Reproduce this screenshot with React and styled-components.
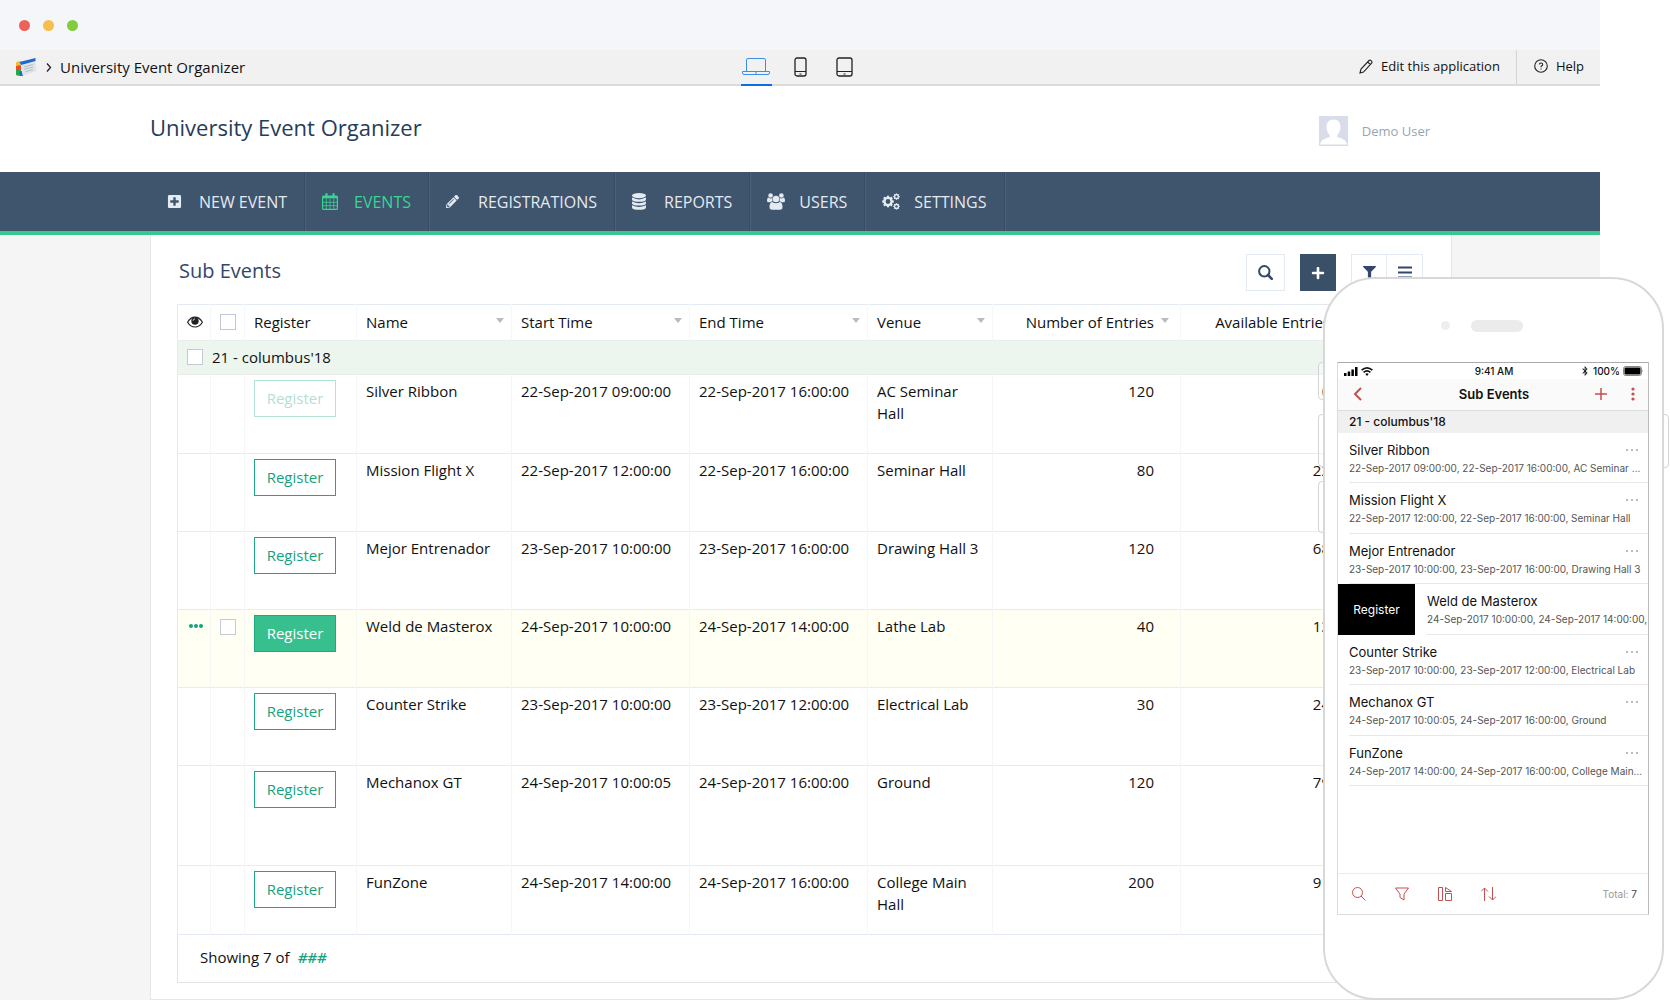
import React from "react";
import styled, { createGlobalStyle } from "styled-components";
import { FaPlusSquare, FaPencilAlt, FaPlus, FaFilter, FaBluetoothB } from "react-icons/fa";

const NAV = [
  { label: "NEW EVENT", icon: "plus" },
  { label: "EVENTS", icon: "calendar", active: true },
  { label: "REGISTRATIONS", icon: "pencil" },
  { label: "REPORTS", icon: "database" },
  { label: "USERS", icon: "users" },
  { label: "SETTINGS", icon: "cogs" },
];

const EVENTS = [
  {
    name: "Silver Ribbon",
    start: "22-Sep-2017 09:00:00",
    end: "22-Sep-2017 16:00:00",
    venue: "AC Seminar Hall",
    entries: 120,
    available: 0,
    closed: true,
    height: 79,
  },
  {
    name: "Mission Flight X",
    start: "22-Sep-2017 12:00:00",
    end: "22-Sep-2017 16:00:00",
    venue: "Seminar Hall",
    entries: 80,
    available: 22,
    height: 78,
  },
  {
    name: "Mejor Entrenador",
    start: "23-Sep-2017 10:00:00",
    end: "23-Sep-2017 16:00:00",
    venue: "Drawing Hall 3",
    entries: 120,
    available: 68,
    height: 78,
  },
  {
    name: "Weld de Masterox",
    start: "24-Sep-2017 10:00:00",
    end: "24-Sep-2017 14:00:00",
    venue: "Lathe Lab",
    entries: 40,
    available: 13,
    selected: true,
    height: 78,
  },
  {
    name: "Counter Strike",
    start: "23-Sep-2017 10:00:00",
    end: "23-Sep-2017 12:00:00",
    venue: "Electrical Lab",
    entries: 30,
    available: 24,
    height: 78,
  },
  {
    name: "Mechanox GT",
    start: "24-Sep-2017 10:00:05",
    end: "24-Sep-2017 16:00:00",
    venue: "Ground",
    entries: 120,
    available: 79,
    height: 100,
  },
  {
    name: "FunZone",
    start: "24-Sep-2017 14:00:00",
    end: "24-Sep-2017 16:00:00",
    venue: "College Main Hall",
    entries: 200,
    available: 91,
    height: 69,
  },
];

const GlobalStyle = createGlobalStyle`
  * {
    box-sizing: border-box;
  }
  body {
    margin: 0;
    background: #fff;
    color: #111;
    font-family: "Open Sans", sans-serif;
    font-size: 15px;
  }
  button {
    font-family: inherit;
    font-size: inherit;
    cursor: pointer;
  }
  a {
    color: inherit;
    text-decoration: none;
  }
`;

const Page = styled.div`
  position: relative;
  padding-right: 70px;
  overflow: hidden;
`;

const TitleBar = styled.div`
  display: flex;
  align-items: center;
  gap: 13px;
  height: 50px;
  padding-left: 19px;
  background: #f4f6f9;
`;

const Dot = styled.span`
  width: 11px;
  height: 11px;
  border-radius: 50%;
  background: ${(props) => props.$color};
`;

const AppBar = styled.div`
  display: grid;
  grid-template-columns: 1fr auto 1fr;
  height: 36px;
  background: #f1f1f1;
  border-bottom: 2px solid #dcdcdc;
`;

const Crumbs = styled.div`
  display: flex;
  align-items: center;
  gap: 8px;
  padding-left: 15px;
`;

const Devices = styled.div`
  display: flex;
  gap: 13px;
  margin-bottom: -2px;
`;

const DeviceButton = styled.button`
  display: flex;
  align-items: center;
  justify-content: center;
  width: 31px;
  padding: 0;
  border: 0;
  border-bottom: 2px solid ${(props) => (props.$active ? "#0a6ee0" : "transparent")};
  background: none;
  color: ${(props) => (props.$active ? "#3b8ee8" : "#222")};
`;

const AppLinks = styled.div`
  display: flex;
  justify-content: flex-end;
  font-size: 13px;
`;

const AppLink = styled.a`
  display: flex;
  align-items: center;
  gap: 8px;
  padding: 0 16px 2px 17px;
  & + & {
    border-left: 1px solid #d4d4d8;
  }
`;

const Header = styled.header`
  display: flex;
  align-items: center;
  justify-content: space-between;
  height: 86px;
  padding: 0 170px 4px 150px;
`;

const AppName = styled.h1`
  margin: 0;
  color: #263c58;
  font-size: 22px;
  font-weight: 400;
`;

const User = styled.a`
  display: flex;
  align-items: center;
  gap: 14px;
  padding-top: 7px;
  color: #93a7b3;
  font-size: 13px;
`;

const Nav = styled.nav`
  display: flex;
  height: 63px;
  padding-left: 150px;
  background: #3f546d;
  border-bottom: 4px solid #37c88f;
`;

const NavItem = styled.a`
  display: flex;
  align-items: center;
  padding: 0 17px;
  border-right: 1px solid #364a61;
  box-shadow: 1px 0 0 #4a627d;
  color: ${(props) => (props.$active ? "#36d694" : "#e4eaf1")};
  font-size: 16px;
`;

const NavIcon = styled.span`
  display: flex;
  width: 32px;
`;

const Content = styled.main`
  min-height: 765px;
  padding: 0 148px 0 150px;
  background: #f5f5f5;
`;

const Panel = styled.section`
  padding: 18px 26px 16px;
  background: #fff;
  border: 1px solid #e6e6e6;
  border-top: 0;
`;

const PanelHead = styled.div`
  display: flex;
  align-items: flex-end;
  height: 38px;
  margin-bottom: 13px;
  padding: 0 2px;
`;

const PanelTitle = styled.h2`
  flex: 1;
  margin: 0;
  color: #32486a;
  font-size: 20px;
  font-weight: 400;
  line-height: 40px;
`;

const ToolButton = styled.button`
  display: flex;
  align-items: center;
  justify-content: center;
  width: 36px;
  height: 37px;
  padding: 0;
  border: 1px solid ${(props) => (props.$solid ? "#3a4f68" : "#e3eaf1")};
  background: ${(props) => (props.$solid ? "#3a4f68" : "#fff")};
  color: ${(props) => (props.$solid ? "#fff" : "#33466b")};
`;

const SearchButton = styled(ToolButton)`
  width: 39px;
`;

const ToolGroup = styled.div`
  display: flex;
  margin-left: 15px;
  ${ToolButton} + ${ToolButton} {
    border-left: 0;
  }
`;

const Table = styled.table`
  width: 100%;
  table-layout: fixed;
  border: 1px solid #e3eaf1;
  border-collapse: collapse;
`;

const Th = styled.th`
  position: relative;
  height: 36px;
  padding: 0 9px 2px;
  border-right: 1px solid #f5f7f8;
  font-weight: 400;
  text-align: ${(props) => props.$align || "left"};
  white-space: nowrap;
`;

const SortArrow = styled.span`
  position: absolute;
  top: 13px;
  right: ${(props) => (props.$inset ? 11 : 7)}px;
  border: 4px solid transparent;
  border-top: 5px solid #bbb;
  border-bottom: 0;
`;

const GroupCell = styled.td`
  height: 34px;
  padding: 0 9px 1px;
  background: #ecf6ef;
  border-top: 1px solid #e9eeea;
`;

const Row = styled.tr`
  background: ${(props) => (props.$selected ? "#fffff3" : "#fff")};
`;

const Td = styled.td`
  padding: 5px 9px 0;
  border-top: 1px solid #ebebeb;
  border-right: 1px solid #f6f6f6;
  line-height: 22px;
  text-align: ${(props) => props.$align || "left"};
  vertical-align: top;
`;

const CheckTd = styled(Td)`
  padding-top: 9px;
`;

const Check = styled.input`
  display: block;
  width: 16px;
  height: 16px;
  margin: 0;
  appearance: none;
  background: #fff;
  border: 1px solid #c3cad3;
`;

const GroupLabel = styled.label`
  display: flex;
  align-items: center;
  gap: 9px;
`;

const RegisterButton = styled.button`
  display: block;
  width: 82px;
  height: 37px;
  padding: 0 0 1px;
  border: 1px solid #1fa884;
  background: ${(props) => (props.$filled ? "#37c08d" : "#fff")};
  color: ${(props) => (props.$filled ? "#fff" : "#14a37f")};
  &:disabled {
    border-color: #b4e3d6;
    color: #b4e0d3;
  }
`;

const MoreButton = styled.button`
  display: block;
  padding: 5px 2px;
  border: 0;
  background: none;
  color: #14a37f;
  svg {
    display: block;
  }
`;

const TableFoot = styled.div`
  display: flex;
  align-items: center;
  gap: 8px;
  height: 48px;
  padding: 0 0 4px 22px;
  border: 1px solid #e4e4e4;
  border-top: 0;
`;

const Total = styled.a`
  color: #14a37f;
  font-style: italic;
  font-weight: 600;
`;

const NumberText = styled.span`
  padding-right: 17px;
`;

const AvailableText = styled.span`
  padding-right: 85px;
`;

const Phone = styled.aside`
  position: absolute;
  top: 277px;
  right: 6px;
  width: 341px;
  height: 723px;
  font-family: Inter, sans-serif;
  color: #111;
`;

const PhoneKey = styled.span`
  position: absolute;
  top: ${(props) => props.$top}px;
  ${(props) => props.$side}: -5px;
  width: 12px;
  height: ${(props) => props.$size}px;
  border: 1px solid #d4d4d4;
  border-radius: 4px;
  background: rgba(255, 255, 255, 0.4);
`;

const PhoneBody = styled.div`
  position: relative;
  height: 100%;
  padding: 0 13px 0 12px;
  border: 2px solid #d8d8d8;
  border-radius: 52px;
  background: #fff;
`;

const Speaker = styled.div`
  display: flex;
  align-items: center;
  justify-content: center;
  gap: 21px;
  height: 83px;
  padding: 10px 22px 0 0;
`;

const Lens = styled.span`
  width: 9px;
  height: 9px;
  border-radius: 50%;
  background: #eee;
`;

const Grille = styled.span`
  width: 52px;
  height: 12px;
  border-radius: 6px;
  background: #ebebeb;
`;

const Screen = styled.div`
  display: flex;
  flex-direction: column;
  height: 553px;
  border: 1px solid #dcdcdc;
  border-top-color: #aaa;
  border-right-color: #bbb;
`;

const StatusBar = styled.div`
  display: grid;
  grid-template-columns: 1fr auto 1fr;
  align-items: center;
  height: 16px;
  padding: 0 4px 0 6px;
  font-size: 10px;
  font-weight: 500;
`;

const StatusSide = styled.div`
  display: flex;
  align-items: center;
  justify-content: ${(props) => (props.$end ? "flex-end" : "flex-start")};
  gap: 3px;
`;

const MobileBar = styled.div`
  display: grid;
  grid-template-columns: 1fr auto 1fr;
  align-items: center;
  height: 32px;
  padding: 0 13px 2px 15px;
  background: #fafafa;
  border-bottom: 1px solid #ddd;
`;

const MobileTitle = styled.h3`
  margin: 0;
  font-size: 13px;
  font-weight: 600;
`;

const MobileActions = styled.div`
  display: flex;
  align-items: center;
  justify-content: flex-end;
  gap: 23px;
`;

const RedButton = styled.button`
  display: flex;
  padding: 0;
  border: 0;
  background: none;
  color: #c4504e;
`;

const MobileGroup = styled.div`
  height: 22px;
  padding-left: 11px;
  background: #f0f0f0;
  font-size: 12px;
  font-weight: 500;
  line-height: 22px;
`;

const MobileList = styled.ul`
  display: grid;
  grid-auto-rows: 1fr;
  height: 353px;
  margin: 0;
  padding: 0;
  list-style: none;
`;

const MobileItem = styled.li`
  display: flex;
  padding-left: ${(props) => (props.$open ? 0 : 11)}px;
  overflow: hidden;
`;

const MobileRegister = styled.button`
  flex: none;
  width: 77px;
  margin-right: 12px;
  border: 0;
  background: #000;
  color: #fff;
  font-size: 12px;
`;

const MobileText = styled.div`
  position: relative;
  flex: 1;
  min-width: 0;
  padding: 8px ${(props) => (props.$open ? 0 : 4)}px 0 0;
  border-bottom: 1px solid #e8e8e8;
`;

const MobileName = styled.div`
  font-size: 13px;
  line-height: 18px;
`;

const MobileInfo = styled.div`
  overflow: hidden;
  color: #555;
  font-size: 10px;
  line-height: 18px;
  text-overflow: ${(props) => (props.$open ? "clip" : "ellipsis")};
  white-space: nowrap;
`;

const ItemMenu = styled(RedButton)`
  position: absolute;
  top: 15px;
  right: 9px;
  color: #a5a5a5;
`;

const MobileFoot = styled.div`
  display: flex;
  align-items: center;
  gap: 29px;
  height: 41px;
  margin-top: auto;
  padding: 0 11px 0 14px;
  border-top: 1px solid #ececec;
`;

const MobileTotal = styled.span`
  margin-left: auto;
  color: #999;
  font-size: 10px;
  b {
    color: #444;
    font-weight: 400;
  }
`;

function Logo() {
  return (
    <svg width="22" height="20" viewBox="0 0 22 20">
      <path d="M1 6q0-1 1-1.300L6 4v8H1z" fill="#f8c01e" />
      <path d="M1 9l5-1v5H1z" fill="#ee4b2b" />
      <path d="M1 13h5v6l-4-.5q-1-.2-1-1.500z" fill="#27a844" />
      <path d="M4 15l3-1 1 5H5z" fill="#1673c9" />
      <path d="M5 5L20 1.500l1.500 12.500L8 19z" fill="#dfe4e9" />
      <path d="M4.500 5L20.500 1v3L6 8z" fill="#1c69cf" />
      <path d="M9 10l9-2.500M9 12.500l9-2.500M10 15l8-2.500" stroke="#b4bcc6" />
    </svg>
  );
}

function Laptop() {
  return (
    <svg width="28" height="20" viewBox="0 0 28 20" fill="none" stroke="currentColor">
      <path d="M4.500 14.500V3q0-1.500 1.500-1.500h16q1.500 0 1.500 1.500v11.500" />
      <path d="M.5 14.500h27v1.500q0 1.500-1.500 1.500H2q-1.500 0-1.500-1.500zM13 16h2" />
    </svg>
  );
}

function Handheld({ width }) {
  return (
    <svg width={width} height="20" viewBox={`0 0 ${width} 20`} fill="none" stroke="currentColor">
      <rect x="1" y="1" width={width - 2} height="18" rx="2" strokeWidth="1.300" />
      <path d={`M1 14.500h${width - 2}M${width / 2 - 1} 17h2`} />
    </svg>
  );
}

function PencilOutline() {
  return (
    <svg width="14" height="15" viewBox="0 0 14 15" fill="none" stroke="#222" strokeWidth="1.100">
      <path d="M1 14l1-4 8-8.500q1-.8 2 .2l.6.600q.8 1 0 1.800L4.500 13zM8.700 3l3 2.800" />
    </svg>
  );
}

function HelpIcon() {
  return (
    <svg width="14" height="14" viewBox="0 0 14 14" fill="none" stroke="#222" strokeWidth="1.100">
      <circle cx="7" cy="7" r="6.300" />
      <path d="M5.300 5.600q0-1.600 1.700-1.600t1.700 1.400q0 .8-.9 1.300T7 8.200M7 9.400v1.200" />
    </svg>
  );
}

function Avatar() {
  return (
    <svg width="29" height="30" viewBox="0 0 29 30">
      <path d="M0 0h29v30H0z" fill="#d9dde9" />
      <path
        d="M14.500 3.500c4.500 0 7 3 7 7.500 0 3-1.200 6-3.200 8v2.200c4 .8 9 2.500 9.700 7.300H1c.7-4.800 5.700-6.500 9.700-7.300V19c-2-2-3.200-5-3.200-8 0-4.500 2.500-7.500 7-7.500z"
        fill="#fff"
      />
    </svg>
  );
}

function CalendarGrid() {
  return (
    <svg width="16" height="17" viewBox="0 0 16 17" fill="none" stroke="currentColor">
      <rect x=".6" y="3" width="14.800" height="13.400" rx="1" strokeWidth="1.200" />
      <path d="M1 4.200h14" strokeWidth="2.400" />
      <path d="M4.500 1.200v3M11.500 1.200v3" strokeWidth="2.200" strokeLinecap="round" />
      <path d="M4.300 6v10M8 6v10M11.700 6v10M1 9.300h14M1 12.700h14" strokeWidth=".8" />
    </svg>
  );
}

function Database() {
  return (
    <svg width="14" height="17" viewBox="0 0 14 17" fill="currentColor">
      <ellipse cx="7" cy="2.600" rx="7" ry="2.600" />
      <path d="M0 4.600q7 3.600 14 0v1.800q0 2.300-7 2.300T0 6.400z" />
      <path d="M0 8.400q7 3.600 14 0v1.800q0 2.300-7 2.300t-7-2.300z" />
      <path d="M0 12.200q7 3.600 14 0v2q0 2.600-7 2.600t-7-2.600z" />
    </svg>
  );
}

function Users() {
  return (
    <svg width="18" height="17" viewBox="0 0 18 17" fill="currentColor">
      <circle cx="3.600" cy="2.500" r="2.300" />
      <circle cx="14.400" cy="2.500" r="2.300" />
      <path d="M1.200 4.500q2.300 1.500 4.300.5-.8 1.800.2 3.300-1.300 0-2.200.9H1.600Q0 9.200 0 7.700 0 5 1.200 4.500z" />
      <path d="M16.800 4.500q-2.300 1.500-4.300.5.8 1.800-.2 3.300 1.300 0 2.200.9h1.900q1.600 0 1.600-1.500 0-2.700-1.200-3.200z" />
      <circle cx="9" cy="6" r="3.300" />
      <path d="M5.200 9q3.800 2.600 7.600 0 2.700.5 2.700 5 0 2.800-2.500 2.800H5Q2.500 16.800 2.500 14q0-4.500 2.700-5z" />
    </svg>
  );
}

// A ring with eight square teeth around it
function Gear({ x, y, r, ring, tooth }) {
  return (
    <g transform={`translate(${x} ${y})`} stroke="currentColor" fill="none">
      <circle r={r} strokeWidth={ring} />
      {[0, 45, 90, 135, 180, 225, 270, 315].map((angle) => (
        <path
          key={angle}
          d={`M0 ${-r}v${-tooth}`}
          strokeWidth={tooth}
          transform={`rotate(${angle})`}
        />
      ))}
    </g>
  );
}

function Cogs() {
  return (
    <svg width="18" height="17" viewBox="0 0 18 17">
      <Gear x={6} y={8.500} r={3.600} ring={2.400} tooth={2.200} />
      <Gear x={14.500} y={3.600} r={1.900} ring={1.300} tooth={1.300} />
      <Gear x={14.500} y={13.400} r={1.900} ring={1.300} tooth={1.300} />
    </svg>
  );
}

function Eye() {
  return (
    <svg width="16" height="12" viewBox="0 0 16 12" fill="none" stroke="#222" display="block">
      <path d="M.6 6.200Q3.500 1.200 8 1.200t7.400 5Q12.500 11 8 11T.6 6.200z" strokeWidth="1.200" />
      <circle cx="8" cy="5" r="3.700" fill="#222" stroke="none" />
      <path d="M6 4.800q.1-1.700 2-1.900" stroke="#fff" strokeWidth=".8" />
    </svg>
  );
}

function SearchIcon() {
  return (
    <svg width="15" height="15" viewBox="0 0 15 15" fill="none" stroke="currentColor">
      <circle cx="6.300" cy="6.300" r="5.200" strokeWidth="2" />
      <path d="M10 10l3.800 3.800" strokeWidth="2.500" strokeLinecap="round" />
    </svg>
  );
}

function ListIcon() {
  return (
    <svg width="14" height="13" viewBox="0 0 14 13" stroke="currentColor" strokeWidth="2">
      <path d="M0 1.500h14M0 6.500h14M0 11.500h14" />
    </svg>
  );
}

function Dots({ size = 2, vertical }) {
  const points = [2, 7, 12];
  return (
    <svg width={vertical ? 4 : 14} height={vertical ? 14 : 4} fill="currentColor">
      {points.map((p) => (
        <circle key={p} cx={vertical ? 2 : p} cy={vertical ? p : 2} r={size} />
      ))}
    </svg>
  );
}

function Signal() {
  return (
    <svg width="14" height="9" viewBox="0 0 14 9">
      <path d="M0 6h2.500v3H0zM3.700 4.500h2.500V9H3.700zM7.400 2.500h2.500V9H7.400zM11 0h2.500v9H11z" />
    </svg>
  );
}

function Wifi() {
  return (
    <svg width="12" height="9" viewBox="0 0 12 9" fill="none" stroke="#111" strokeWidth="1.700">
      <path d="M.6 3.200q5.400-4.600 10.800 0M2.600 5.300q3.400-2.800 6.800 0" />
      <path d="M6 9L4.300 7q1.700-1.400 3.400 0z" fill="#111" stroke="none" />
    </svg>
  );
}

function Battery() {
  return (
    <svg width="21" height="10" viewBox="0 0 21 10">
      <rect x=".5" y=".5" width="18" height="9" rx="2" fill="none" stroke="#888" />
      <rect x="1.500" y="1.500" width="16" height="7" rx="1" />
      <path d="M19.500 3.500q1.500 1.500 0 3z" fill="#888" />
    </svg>
  );
}

function LineIcon({ path, width = 14 }) {
  return (
    <svg width={width} height="14" viewBox={`0 0 ${width} 14`} fill="none" stroke="currentColor">
      <path d={path} />
    </svg>
  );
}

const NAV_ICONS = {
  plus: <FaPlusSquare size={15} />,
  calendar: <CalendarGrid />,
  pencil: <FaPencilAlt size={13} />,
  database: <Database />,
  users: <Users />,
  cogs: <Cogs />,
};

const FOOT_ICONS = [
  ["Search", "M10.500 5.500a5 5 0 1 1-10 0a5 5 0 0 1 10 0zM9 9l4.500 4.500"],
  ["Filter", "M.5 1h13L9 7v6l-4-2.500V7z"],
  ["Reports", "M.5.500h4v13h-4zM7.500 6.500h6v7h-6zM7.500 4.500v-4l6 4z"],
  ["Sort", "M3.500 14V1M0 4.500l3.500-3.500L7 4.500M11.500 0v13M8 9.500l3.500 3.500 3.500-3.500"],
];

function EventTable() {
  return (
    <Table>
      <colgroup>
        <col width="33" />
        <col width="34" />
        <col width="112" />
        <col width="155" />
        <col width="178" />
        <col width="178" />
        <col width="125" />
        <col width="188" />
        <col />
      </colgroup>
      <thead>
        <tr>
          <Th>
            <Eye />
          </Th>
          <Th>
            <Check type="checkbox" aria-label="Select all" />
          </Th>
          <Th>Register</Th>
          {["Name", "Start Time", "End Time", "Venue"].map((label) => (
            <Th key={label}>
              {label}
              <SortArrow />
            </Th>
          ))}
          <Th $align="right">
            <NumberText>Number of Entries</NumberText>
            <SortArrow $inset />
          </Th>
          <Th $align="right">
            <AvailableText>Available Entries</AvailableText>
          </Th>
        </tr>
      </thead>
      <tbody>
        <tr>
          <GroupCell colSpan={9}>
            <GroupLabel>
              <Check type="checkbox" />
              21 - columbus'18
            </GroupLabel>
          </GroupCell>
        </tr>
        {EVENTS.map((event) => (
          <Row key={event.name} height={event.height} $selected={event.selected}>
            <CheckTd>
              {event.selected && (
                <MoreButton aria-label="More">
                  <Dots />
                </MoreButton>
              )}
            </CheckTd>
            <CheckTd>
              {event.selected && <Check type="checkbox" aria-label={event.name} />}
            </CheckTd>
            <Td>
              <RegisterButton disabled={event.closed} $filled={event.selected}>
                Register
              </RegisterButton>
            </Td>
            <Td>{event.name}</Td>
            <Td>{event.start}</Td>
            <Td>{event.end}</Td>
            <Td>{event.venue}</Td>
            <Td $align="right">
              <NumberText>{event.entries}</NumberText>
            </Td>
            <Td $align="right">
              <AvailableText>{event.available}</AvailableText>
            </Td>
          </Row>
        ))}
      </tbody>
    </Table>
  );
}

function PhonePreview() {
  return (
    <Phone>
      <PhoneKey $side="left" $top={85} $size={38} />
      <PhoneKey $side="left" $top={137} $size={53} />
      <PhoneKey $side="left" $top={204} $size={52} />
      <PhoneKey $side="right" $top={137} $size={54} />
      <PhoneBody>
        <Speaker>
          <Lens />
          <Grille />
        </Speaker>
        <Screen>
          <StatusBar>
            <StatusSide>
              <Signal />
              <Wifi />
            </StatusSide>
            <span>9:41 AM</span>
            <StatusSide $end>
              <FaBluetoothB size={10} />
              100%
              <Battery />
            </StatusSide>
          </StatusBar>
          <MobileBar>
            <RedButton aria-label="Back">
              <svg width="9" height="14" fill="none" stroke="currentColor" strokeWidth="2">
                <path d="M8 1L2 7l6 6" />
              </svg>
            </RedButton>
            <MobileTitle>Sub Events</MobileTitle>
            <MobileActions>
              <RedButton aria-label="Add">
                <svg width="14" height="14" stroke="currentColor" strokeWidth="1.500">
                  <path d="M7 1v12M1 7h12" />
                </svg>
              </RedButton>
              <RedButton aria-label="Menu">
                <Dots vertical size={1.6} />
              </RedButton>
            </MobileActions>
          </MobileBar>
          <MobileGroup>21 - columbus'18</MobileGroup>
          <MobileList>
            {EVENTS.map((event) => (
              <MobileItem key={event.name} $open={event.selected}>
                {event.selected && <MobileRegister>Register</MobileRegister>}
                <MobileText $open={event.selected}>
                  <MobileName>{event.name}</MobileName>
                  <MobileInfo $open={event.selected}>
                    {event.start}, {event.end}, {event.venue}
                  </MobileInfo>
                  {!event.selected && (
                    <ItemMenu aria-label="More">
                      <Dots size={1} />
                    </ItemMenu>
                  )}
                </MobileText>
              </MobileItem>
            ))}
          </MobileList>
          <MobileFoot>
            {FOOT_ICONS.map(([label, path]) => (
              <RedButton key={label} aria-label={label}>
                <LineIcon path={path} width={label === "Sort" ? 15 : 14} />
              </RedButton>
            ))}
            <MobileTotal>
              Total: <b>7</b>
            </MobileTotal>
          </MobileFoot>
        </Screen>
      </PhoneBody>
    </Phone>
  );
}

function App() {
  return (
    <Page>
      <GlobalStyle />
      <TitleBar>
        <Dot $color="#eb6258" />
        <Dot $color="#f6be4f" />
        <Dot $color="#84cb3f" />
      </TitleBar>
      <AppBar>
        <Crumbs>
          <Logo />
          <svg width="7" height="9" fill="none" stroke="#222" strokeWidth="1.300">
            <path d="M2 .5l3.500 4L2 8.500" />
          </svg>
          <span>University Event Organizer</span>
        </Crumbs>
        <Devices>
          <DeviceButton $active aria-label="Desktop">
            <Laptop />
          </DeviceButton>
          <DeviceButton aria-label="Phone">
            <Handheld width={13} />
          </DeviceButton>
          <DeviceButton aria-label="Tablet">
            <Handheld width={17} />
          </DeviceButton>
        </Devices>
        <AppLinks>
          <AppLink href="#edit">
            <PencilOutline />
            Edit this application
          </AppLink>
          <AppLink href="#help">
            <HelpIcon />
            Help
          </AppLink>
        </AppLinks>
      </AppBar>
      <Header>
        <AppName>University Event Organizer</AppName>
        <User href="#user">
          <Avatar />
          Demo User
        </User>
      </Header>
      <Nav>
        {NAV.map((item) => (
          <NavItem key={item.label} href="#nav" $active={item.active}>
            <NavIcon>{NAV_ICONS[item.icon]}</NavIcon>
            {item.label}
          </NavItem>
        ))}
      </Nav>
      <Content>
        <Panel>
          <PanelHead>
            <PanelTitle>Sub Events</PanelTitle>
            <SearchButton aria-label="Search">
              <SearchIcon />
            </SearchButton>
            <ToolGroup>
              <ToolButton $solid aria-label="Add">
                <FaPlus size={14} />
              </ToolButton>
            </ToolGroup>
            <ToolGroup>
              <ToolButton aria-label="Filter">
                <FaFilter size={13} />
              </ToolButton>
              <ToolButton aria-label="List">
                <ListIcon />
              </ToolButton>
            </ToolGroup>
          </PanelHead>
          <EventTable />
          <TableFoot>
            Showing 7 of <Total href="#total">###</Total>
          </TableFoot>
        </Panel>
      </Content>
      <PhonePreview />
    </Page>
  );
}

export default App;
